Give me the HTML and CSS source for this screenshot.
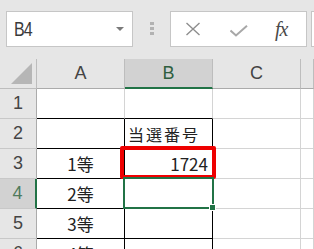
FILE: index.html
```html
<!DOCTYPE html>
<html lang="ja">
<head>
    <meta charset="UTF-8">
    <meta name="viewport" content="width=device-width, initial-scale=1.0">
    <title>当選番号</title>
    <link rel="stylesheet" href="styles.css">
</head>
<body>
<div class="toolbar">
    <div class="namebox">
        <span class="ref">B4</span>
        <span class="caret"></span>
    </div>
    <div class="grip"><i></i><i></i><i></i></div>
    <div class="fbox">
        <svg class="icon-x" width="16" height="14" viewBox="0 0 16 14">
            <path d="M1.5 1 L14.5 13 M14.5 1 L1.5 13" stroke="#8e8e8e" stroke-width="1.4" fill="none"/>
        </svg>
        <svg class="icon-ok" width="18" height="12" viewBox="0 0 18 12">
            <path d="M0.5 5.5 L6 10.5 L17 0.8" stroke="#a8a8a8" stroke-width="2" fill="none"/>
        </svg>
        <span class="fx">fx</span>
    </div>
    <div class="fbar"></div>
</div>

<div class="sheet">
    <div class="hd corner">
        <svg width="22" height="22" viewBox="0 0 22 22"><polygon points="21,0 21,21 0,21" fill="#b6b6b6"/></svg>
    </div>
    <div class="hd col">A</div>
    <div class="hd col on">B</div>
    <div class="hd col">C</div>
    <div class="hd col"></div>

    <div class="hd row">1</div>
    <div class="c tb"></div>
    <div class="c tb"></div>
    <div class="c"></div>
    <div class="c"></div>

    <div class="hd row">2</div>
    <div class="c ta"></div>
    <div class="c tbx left">当選番号</div>
    <div class="c"></div>
    <div class="c"></div>

    <div class="hd row">3</div>
    <div class="c ta mid">1等</div>
    <div class="c tbx num">1724</div>
    <div class="c"></div>
    <div class="c"></div>

    <div class="hd row on">4</div>
    <div class="c ta mid">2等</div>
    <div class="c tbx"></div>
    <div class="c"></div>
    <div class="c"></div>

    <div class="hd row">5</div>
    <div class="c ta mid">3等</div>
    <div class="c tbx"></div>
    <div class="c"></div>
    <div class="c"></div>

    <div class="hd row">6</div>
    <div class="c ta mid">4等</div>
    <div class="c tbx"></div>
    <div class="c"></div>
    <div class="c"></div>

    <div class="mark"></div>
    <div class="sel"><span class="handle"></span></div>
</div>
</body>
</html>
```

FILE: styles.css
```css
body { margin: 0; background: #e6e6e6; font-family: "Noto Sans CJK JP", "Liberation Sans", sans-serif; overflow: hidden; height: 249px; }

.toolbar { display: flex; align-items: flex-start; height: 59px; padding-top: 11px; box-sizing: border-box; }
.namebox {
    display: flex;
    align-items: center;
    justify-content: space-between;
    width: 127px;
    height: 36px;
    margin-left: 6px;
    padding: 0 8px 0 7px;
    box-sizing: border-box;
    background: #fff;
    border: 1px solid #c6c6c6;
}
.ref { font-family: "Liberation Sans", sans-serif; font-size: 20px; color: #3a3a3a; letter-spacing: -1px; transform: scaleX(0.8); transform-origin: left center; }
.caret { width: 0; height: 0; border-left: 4px solid transparent; border-right: 4px solid transparent; border-top: 4px solid #7a7a7a; }

.grip { display: flex; flex-direction: column; gap: 2px; width: 37px; padding: 11px 0 0 17px; box-sizing: border-box; }
.grip i { display: block; width: 4px; height: 3px; background: #b2b2b2; }

.fbox {
    display: flex;
    align-items: center;
    width: 137px;
    height: 36px;
    box-sizing: border-box;
    background: #fff;
    border: 1px solid #c6c6c6;
}
.icon-x { margin-left: 14px; }
.icon-ok { margin-left: 29px; margin-top: 3px; }
.fx { margin-left: 27px; font-family: "Liberation Serif", serif; font-style: italic; font-size: 20px; color: #4a4a4a; letter-spacing: -1px; }
.fbar { flex: 1; height: 36px; margin-left: 4px; box-sizing: border-box; background: #fff; border: 1px solid #c6c6c6; border-right: none; }

.sheet {
    position: relative;
    display: grid;
    grid-template-columns: 37px 88px 88px 88px 1fr;
    grid-auto-rows: 30px;
    background: #fff;
}
.sheet > div { box-sizing: border-box; }

.hd { display: flex; align-items: center; justify-content: center; background: #e6e6e6; color: #444; font-family: "Liberation Sans", sans-serif; font-size: 18px; border-right: 1px solid #bdbdbd; border-bottom: 1px solid #bdbdbd; }
.hd.col { border-bottom-color: #ababab; }
.hd.col.on { background: #d2d2d2; color: #2f5f3f; border-bottom: 2px solid #217346; }
.hd.row { border-right-color: #ababab; border-bottom-color: #c8c8c8; }
.hd.row.on { background: #d2d2d2; color: #4f7a5c; border-right: 2px solid #217346; }
.corner { align-items: flex-end; justify-content: flex-end; padding: 0 3px 3px 0; }

.c {
    display: flex;
    align-items: center;
    padding: 0 3px;
    font-size: 16px;
    color: #222;
    border-right: 1px solid #d4d4d4;
    border-bottom: 1px solid #d4d4d4;
}
.c.tb { border-bottom-color: #000; }
.c.ta { border-right-color: #000; border-bottom-color: #000; }
.c.tbx { border-right-color: #000; border-bottom-color: #000; }
.c.mid { justify-content: center; font-size: 17px; }
.c.left { letter-spacing: 2px; }
.c.num { justify-content: flex-end; padding-right: 4px; font-size: 17px; }

.mark { position: absolute; left: 120px; top: 87px; width: 96px; height: 33px; box-sizing: border-box; border: 4px solid #ee0000; border-radius: 2px; }
.sel { position: absolute; left: 123px; top: 118px; width: 91px; height: 32px; box-sizing: border-box; border: 2px solid #217346; }
.handle { position: absolute; right: -4px; bottom: -4px; width: 5px; height: 5px; background: #217346; border: 1px solid #fff; }
```
